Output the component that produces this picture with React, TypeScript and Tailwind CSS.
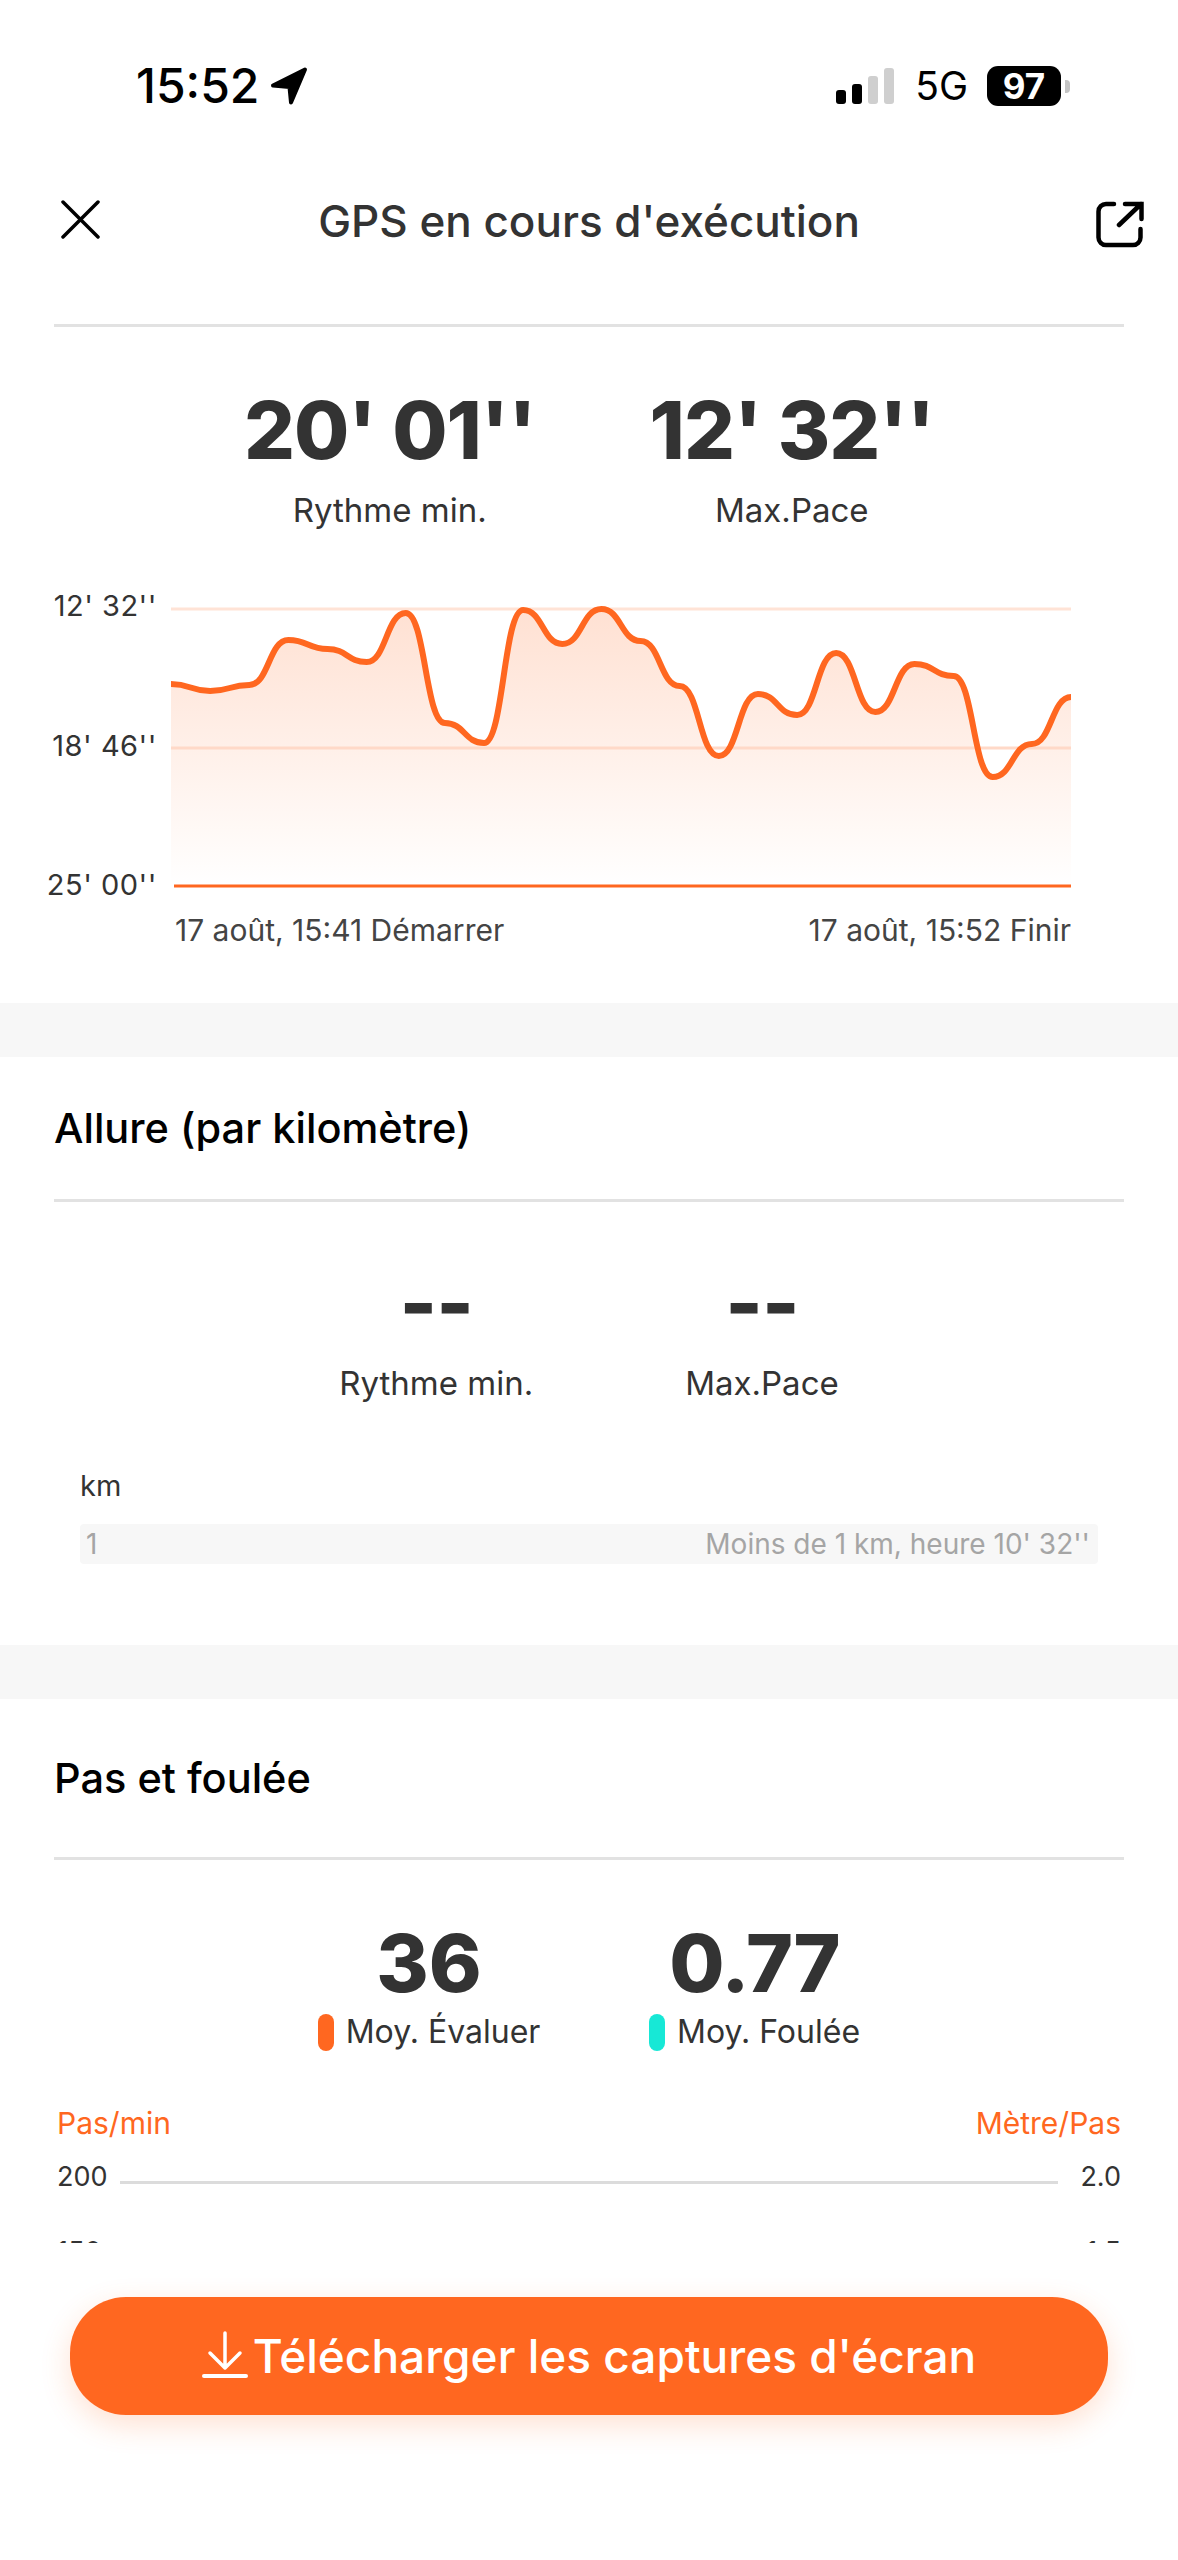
const ORANGE = '#ff6720';

// y values of the pace curve, read off the reference (one sample every 39px)
const pace = [
  684, 691, 685, 640, 649, 662, 613, 723, 743, 610, 644, 609, 641, 686, 756, 694, 715, 653, 712, 664, 676, 777, 744, 697,
];

const CHART_TOP = 600;
const STEP = 900 / 23;

// every sample gets a flat tangent, which gives the shoulders seen on the curve
function buildCurve(points: { x: number; y: number }[]) {
  let d = `M${points[0].x} ${points[0].y}`;
  for (let i = 1; i < points.length; i++) {
    const h = (points[i].x - points[i - 1].x) / 2;
    d += ` C${points[i - 1].x + h} ${points[i - 1].y} ${points[i].x - h} ${points[i].y} ${points[i].x} ${points[i].y}`;
  }
  return d;
}

function PaceChart() {
  const points = pace.map((y, i) => ({ x: i * STEP, y: y - CHART_TOP }));
  const line = buildCurve(points);
  return (
    <svg width="900" height="295" viewBox="0 0 900 295" className="block">
      <defs>
        <linearGradient id="paceFill" x1="0" y1="9" x2="0" y2="286" gradientUnits="userSpaceOnUse">
          <stop offset="0" stopColor={ORANGE} stopOpacity="0.2" />
          <stop offset="1" stopColor={ORANGE} stopOpacity="0" />
        </linearGradient>
      </defs>
      <path d={`${line} L900 286 L0 286 Z`} fill="url(#paceFill)" />
      <line x1="0" x2="900" y1="9" y2="9" stroke="#ffe3d6" strokeWidth="3" />
      <line x1="0" x2="900" y1="148" y2="148" stroke="#ffd9c8" strokeWidth="3" />
      <line x1="3" x2="900" y1="286" y2="286" stroke={ORANGE} strokeWidth="3" />
      <path d={line} fill="none" stroke={ORANGE} strokeWidth="6" strokeLinecap="round" />
    </svg>
  );
}

function StatusBar() {
  return (
    <div className="flex h-[130px] items-end justify-between pb-[24px] pl-[136px] pr-[108px]">
      <div className="flex items-center gap-[11px]">
        <span className="text-[48px] leading-[40px] font-medium text-black">15:52</span>
        <svg width="38" height="38" viewBox="0 0 38 38">
          <path d="M35 2.5 3 18.5 19.5 20 21 35.5Z" fill="#000" stroke="#000" strokeWidth="4" strokeLinejoin="round" />
        </svg>
      </div>
      <div className="flex items-center">
        <div className="flex h-[36px] items-end gap-[6px]">
          <div className="h-[14px] w-[10px] rounded-[3px] bg-black" />
          <div className="h-[20px] w-[10px] rounded-[3px] bg-black" />
          <div className="h-[28px] w-[10px] rounded-[3px] bg-[#cfcfcf]" />
          <div className="h-[36px] w-[10px] rounded-[3px] bg-[#cfcfcf]" />
        </div>
        <span className="ml-[21px] text-[39px] leading-[40px] font-normal text-black">5G</span>
        <div className="ml-[19px] flex h-[40px] w-[74px] items-center justify-center rounded-[11px] bg-black text-[35px] leading-[40px] font-bold text-white">
          97
        </div>
        <div className="ml-[4px] h-[13px] w-[5px] rounded-r-[4px] bg-[#c4c4c4]" />
      </div>
    </div>
  );
}

function Header() {
  return (
    <div className="relative mx-[54px] flex h-[197px] items-start justify-center border-b-[3px] border-[#e2e2e2]">
      <button className="absolute left-[7px] top-[70px]">
        <svg width="39" height="39" viewBox="0 0 39 39" className="block">
          <path d="M2 2 37 37M37 2 2 37" stroke="#000" strokeWidth="3.5" strokeLinecap="round" />
        </svg>
      </button>
      <h1 className="mt-[66px] text-[44px] leading-[50px] font-medium text-[#333]">GPS en cours d'exécution</h1>
      <button className="absolute right-[-20px] top-[70px]">
        <svg width="48" height="48" viewBox="0 0 48 48" fill="none" className="block">
          <path
            d="M18 4H10a7.5 7.5 0 0 0-7.5 7.5v26A7.5 7.5 0 0 0 10 45h27a7.5 7.5 0 0 0 7.5-7.5V29"
            stroke="#000"
            strokeWidth="4.5"
            strokeLinecap="round"
          />
          <path d="M23 25 45 4M29 4h16.5v15" stroke="#000" strokeWidth="4.5" strokeLinecap="round" />
        </svg>
      </button>
    </div>
  );
}

function BigStat({ value, label }: { value: string; label: string }) {
  return (
    <div className="flex flex-col items-center">
      <div className="text-[80px] leading-[90px] font-extrabold tracking-[-1px] text-[#333]">{value}</div>
      <div className="mt-[15px] text-[33px] leading-[40px] text-[#333]">{label}</div>
    </div>
  );
}

function SectionTitle({ children }: { children: string }) {
  return <h2 className="text-[41.5px] leading-[50px] font-medium text-black">{children}</h2>;
}

function Gap() {
  return <div className="h-[54px] bg-[#f7f7f7]" />;
}

export default function App() {
  return (
    <div className="relative h-[2560px] overflow-hidden bg-white font-['Inter',sans-serif]">
      <div className="h-[2243px] overflow-hidden">
        <StatusBar />
        <Header />

        {/* GPS pace */}
        <section className="h-[676px]">
          <div className="flex justify-center gap-[114px] pt-[58px]">
            <BigStat value="20' 01''" label="Rythme min." />
            <BigStat value="12' 32''" label="Max.Pace" />
          </div>
          <div className="mt-[70px] flex items-start">
            <div className="mt-[-12px] flex h-[315px] w-[171px] flex-col items-end justify-between pr-[14px] text-[29px] leading-[36px] tracking-[0.5px] text-[#333]">
              <span>12' 32''</span>
              <span>18' 46''</span>
              <span>25' 00''</span>
            </div>
            <PaceChart />
          </div>
          <div className="ml-[175px] mr-[107px] mt-[9px] flex justify-between text-[30px] leading-[36px] text-[#444]">
            <span>17 août, 15:41 Démarrer</span>
            <span>17 août, 15:52 Finir</span>
          </div>
        </section>
        <Gap />

        {/* per kilometre */}
        <section className="h-[588px] px-[54px]">
          <div className="flex h-[145px] items-center border-b-[3px] border-[#e2e2e2]">
            <SectionTitle>Allure (par kilomètre)</SectionTitle>
          </div>
          <div className="mt-[56px] flex justify-center gap-[152px]">
            <BigStat value="--" label="Rythme min." />
            <BigStat value="--" label="Max.Pace" />
          </div>
          <div className="ml-[26px] mt-[65px] text-[29px] leading-[36px] text-[#333]">km</div>
          <div className="mx-[26px] mt-[20px] flex h-[40px] items-center justify-between rounded-[4px] bg-[#f7f7f7] pl-[6px] pr-[8px] text-[28px] leading-[36px] text-[#a5a5a5]">
            <span>1</span>
            <span>Moins de 1 km, heure 10' 32''</span>
          </div>
        </section>
        <Gap />

        {/* cadence and stride */}
        <section className="px-[54px]">
          <div className="flex h-[161px] items-center border-b-[3px] border-[#e2e2e2]">
            <SectionTitle>Pas et foulée</SectionTitle>
          </div>
          <div className="mt-[58px] flex justify-center gap-[105px]">
            <div className="flex w-[226px] flex-col items-center">
              <div className="text-[80px] leading-[90px] font-extrabold text-[#333]">36</div>
              <div className="mt-[4px] flex items-center gap-[12px] whitespace-nowrap text-[32px] leading-[40px] text-[#333]">
                <span className="h-[37px] w-[16px] shrink-0 rounded-full bg-[#ff6720]" />
                Moy. Évaluer
              </div>
            </div>
            <div className="flex w-[215px] flex-col items-center">
              <div className="text-[80px] leading-[90px] font-extrabold tracking-[-1px] text-[#333]">0.77</div>
              <div className="mt-[4px] flex items-center gap-[12px] whitespace-nowrap text-[32px] leading-[40px] text-[#333]">
                <span className="h-[37px] w-[16px] shrink-0 rounded-full bg-[#17e8d6]" />
                Moy. Foulée
              </div>
            </div>
          </div>
          <div className="mt-[53px] flex justify-between px-[3px] text-[30px] leading-[36px] text-[#ff6720]">
            <span>Pas/min</span>
            <span>Mètre/Pas</span>
          </div>
          <div className="mt-[18px] flex items-center px-[3px] text-[27px] leading-[36px] text-[#333]">
            <span className="w-[63px]">200</span>
            <div className="mt-[10px] h-[3px] flex-1 bg-[#dcdcdc]" />
            <span className="w-[63px] text-right">2.0</span>
          </div>
          <div className="mt-[39px] flex items-center justify-between px-[3px] text-[27px] leading-[36px] text-[#333]">
            <span>150</span>
            <span>1.5</span>
          </div>
        </section>
      </div>

      <div className="px-[70px] pt-[54px]">
        <button className="flex h-[118px] w-full items-center justify-center gap-[5px] rounded-[56px] bg-[#ff6720] text-[46px] font-medium text-white shadow-[0_10px_30px_rgba(255,103,32,0.2)]">
          <svg width="46" height="48" viewBox="0 0 46 48" fill="none" className="mt-[-2px]">
            <path d="M23 2V37M8 22 23 37 38 22" stroke="#fff" strokeWidth="3.5" strokeLinecap="round" strokeLinejoin="round" />
            <path d="M2 45H44" stroke="#fff" strokeWidth="4" strokeLinecap="round" />
          </svg>
          Télécharger les captures d'écran
        </button>
      </div>
    </div>
  );
}
